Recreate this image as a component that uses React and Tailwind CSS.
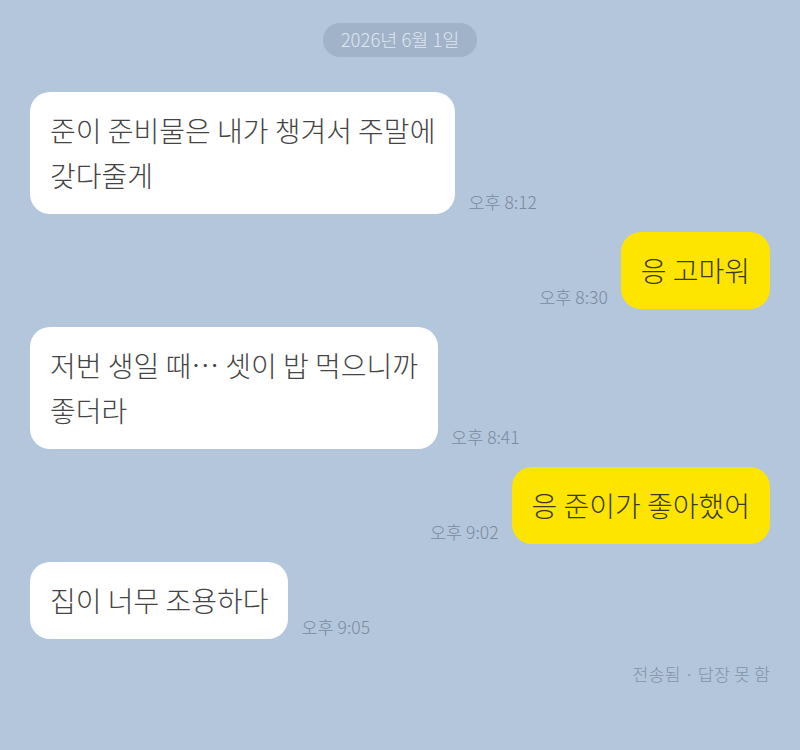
const messages = [
  { id: 1, mine: false, lines: ['준이 준비물은 내가 챙겨서 주말에', '갖다줄게'], time: '오후 8:12' },
  { id: 2, mine: true, lines: ['응 고마워'], time: '오후 8:30' },
  { id: 3, mine: false, lines: ['저번 생일 때… 셋이 밥 먹으니까', '좋더라'], time: '오후 8:41' },
  { id: 4, mine: true, lines: ['응 준이가 좋아했어'], time: '오후 9:02' },
  { id: 5, mine: false, lines: ['집이 너무 조용하다'], time: '오후 9:05' },
];

const fontStack = { fontFamily: '"Noto Sans CJK KR", "Noto Sans", sans-serif' };

function Bubble({ msg }) {
  const bubbleStyle = msg.mine
    ? 'bg-[#fee500] text-[#3a3a20]'
    : 'bg-white text-[#444444]';

  const time = (
    <span className="text-[17.5px] leading-none text-[#7b8a9f] whitespace-nowrap mb-[4px] font-light">
      {msg.time}
    </span>
  );

  return (
    <div className={`flex items-end gap-[13px] ${msg.mine ? 'justify-end' : 'justify-start'}`}>
      {msg.mine && time}
      <div
        className={`rounded-[20px] px-[20px] py-[16px] text-[28px] leading-[45px] font-light whitespace-nowrap ${bubbleStyle}`}
      >
        {msg.lines.map((line, i) => (
          <div key={i}>{line}</div>
        ))}
      </div>
      {!msg.mine && time}
    </div>
  );
}

export default function App() {
  return (
    <div className="w-[800px] h-[750px] bg-[#b3c6db] overflow-hidden" style={fontStack}>
      <div className="flex justify-center pt-[23px]">
        <div className="h-[34px] px-[18px] rounded-full bg-[#a0b3c9] text-[#dfe6ef] text-[18.5px] font-light flex items-center">
          2026년 6월 1일
        </div>
      </div>

      <div className="px-[30px] pt-[35px] flex flex-col gap-[18px]">
        {messages.map((msg) => (
          <Bubble key={msg.id} msg={msg} />
        ))}
      </div>

      <div className="px-[30px] pt-[22px] flex justify-end text-[17.5px] text-[#8493a7] font-light">
        전송됨 · 답장 못 함
      </div>
    </div>
  );
}
